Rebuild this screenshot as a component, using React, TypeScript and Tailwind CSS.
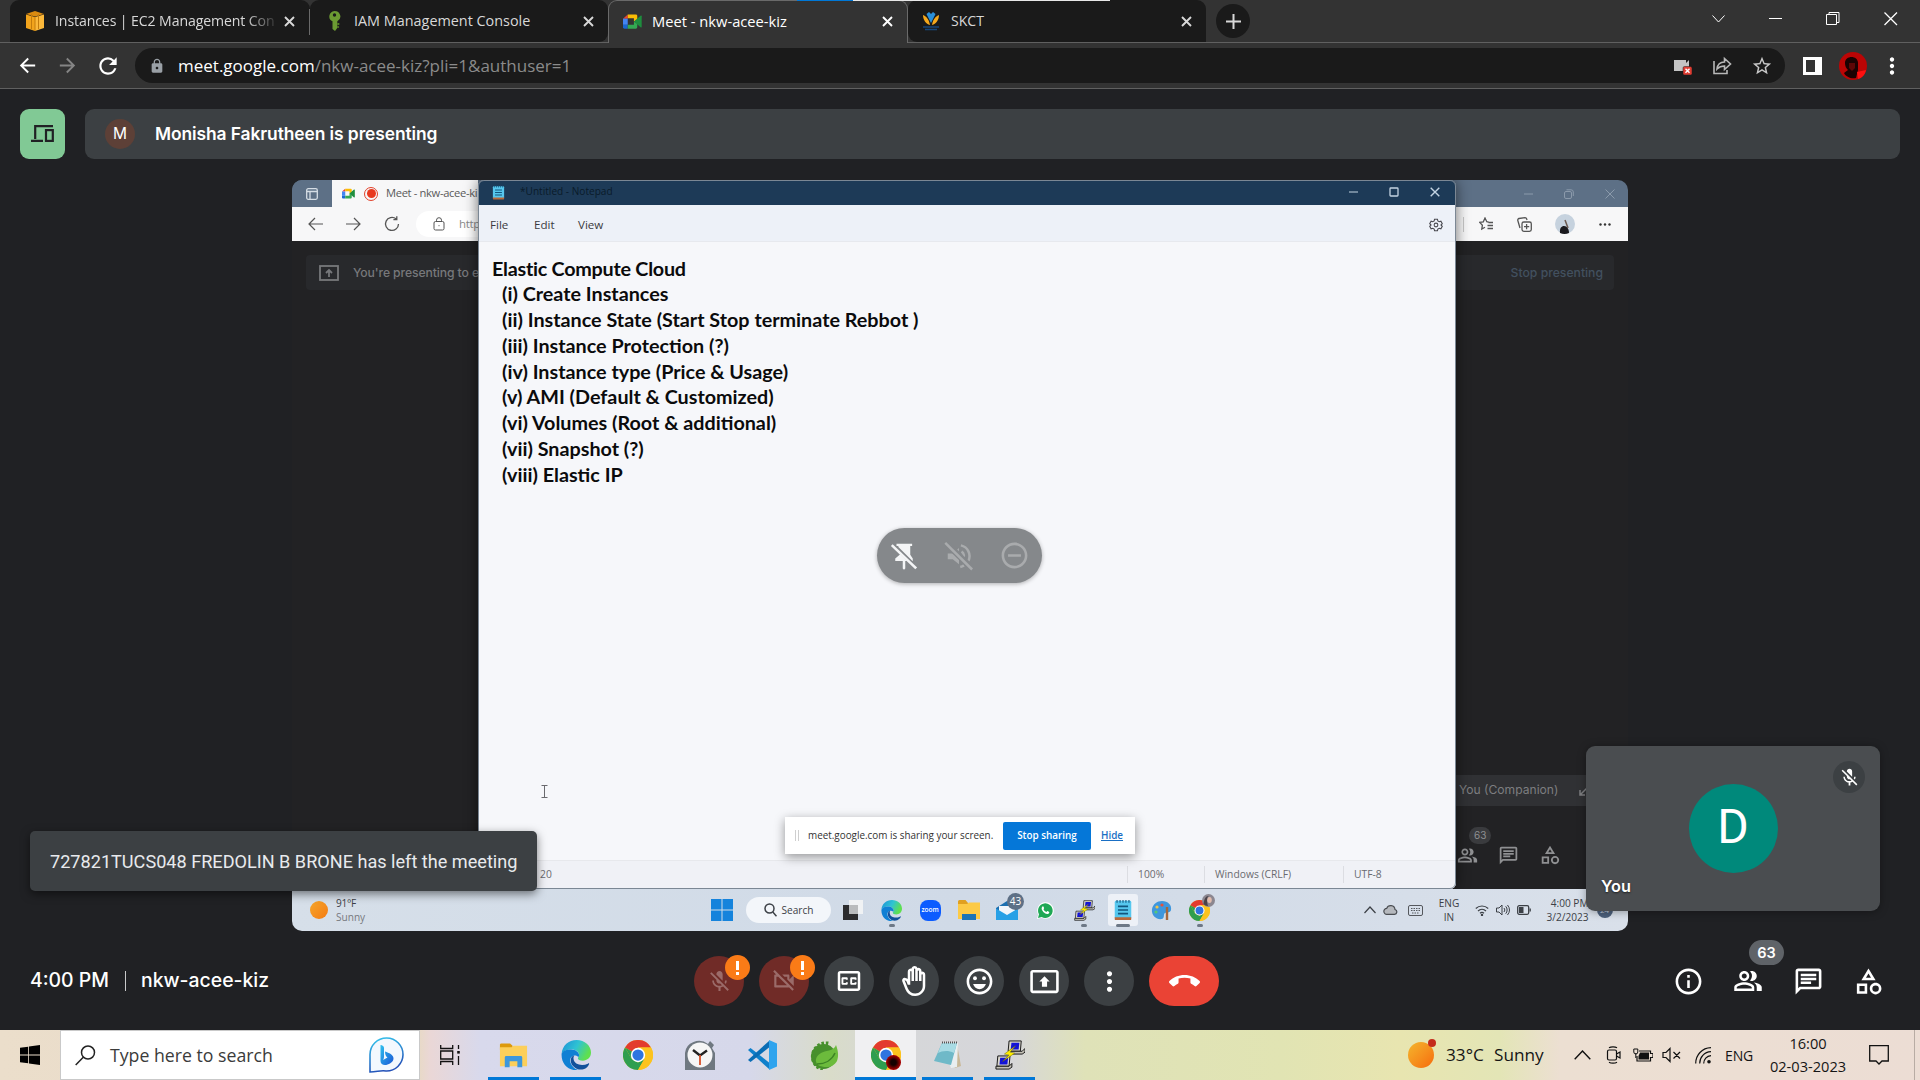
import React from "react";
import type { ReactNode } from "react";
import {
  MdArrowBack,
  MdArrowForward,
  MdCallEnd,
  MdLock,
  MdMicOff,
  MdMoreVert,
  MdOutlineBackHand,
  MdOutlineCategory,
  MdOutlineChat,
  MdOutlineClosedCaption,
  MdOutlineEmojiEmotions,
  MdOutlineInfo,
  MdOutlinePeopleAlt,
  MdOutlinePresentToAll,
  MdOutlineVideocamOff,
  MdRefresh,
  MdRemoveCircleOutline,
  MdStarBorder,
} from "react-icons/md";

const OPEN = "font-['Open_Sans',sans-serif]";
const INTER = "font-['Inter',sans-serif]";

/* ---------- App logos ---------- */

function ChromeLogo({ size }: { size: number }) {
  return (
    <svg width={size} height={size} viewBox="0 0 48 48">
      <circle cx="24" cy="24" r="24" fill="#fcc31e" />
      <path d="M24 24 3.2 12A24 24 0 0 1 44.8 12H24z" fill="#e33b2e" />
      <path d="M3.2 12A24 24 0 0 0 24 48l10.4-18L24 36 13.6 30z" fill="#2f9e4f" />
      <path d="M3.2 12 13.6 30 24 24z" fill="#2f9e4f" />
      <path d="M44.8 12A24 24 0 0 1 24 48l10.4-18A12 12 0 0 0 34.4 18L24 12z" fill="#fcc31e" />
      <circle cx="24" cy="24" r="11.5" fill="#fff" />
      <circle cx="24" cy="24" r="9" fill="#2f74e0" />
    </svg>
  );
}

function EdgeLogo({ size }: { size: number }) {
  return (
    <svg width={size} height={size} viewBox="0 0 48 48">
      <defs>
        <linearGradient id="edgeTop" x1="0" y1="0" x2="1" y2="0.4">
          <stop offset="0" stopColor="#1d8fd8" />
          <stop offset="0.55" stopColor="#2fc3d3" />
          <stop offset="1" stopColor="#5fe04f" />
        </linearGradient>
      </defs>
      <path d="M1 22C2 9 12 0 25 0c13 0 23 9 23 20 0 8-6 13-13 13-5 0-8-2-8-4 0-1 2-2 2-5 0-5-5-9-12-9C9 15 3 18 1 22z" fill="url(#edgeTop)" />
      <path d="M1 22c2-5 8-7 15-7 8 0 13 5 13 9 0 2-1 3-1 3-2-2-5-3-8-2-6 2-7 9-3 15 3 5 8 8 13 8-1 0-4 .5-6 .4C10 48 0 37 1 22z" fill="#1080d4" />
      <path d="M17 27c-3 6-1 13 5 17 6 5 15 4 20-1 2-2 3-4 3-5 0-1-1-1-2 0-9 4-22 2-23-8 0-2 0-3 1-5-2 0-3 1-4 2z" fill="#12509b" />
    </svg>
  );
}

function FolderLogo({ size }: { size: number }) {
  return (
    <svg width={size} height={size} viewBox="0 0 32 32">
      <path d="M2 5a1.500 1.500 0 0 1 1.500-1.500h9L15 6v4H2z" fill="#dd9a0c" />
      <path d="M2 7.500h12l2-1.500h14v21H2z" fill="#fccf5a" />
      <path d="M7 28V18a1.500 1.500 0 0 1 1.500-1.500h15A1.500 1.500 0 0 1 25 18v10h-5v-6h-8v6z" fill="#3d97dc" />
    </svg>
  );
}

function PuttyLogo({ size }: { size: number }) {
  return (
    <svg width={size} height={size} viewBox="0 0 32 32" stroke="#111" strokeWidth="1">
      <path d="M15 1h13l-1 11H14z" fill="#d9d6cc" />
      <path d="M17.500 3h8.500l-.8 7h-8.400z" fill="#1313d8" stroke="none" />
      <path d="M15 12h14l3-3v4l-3 2H15z" fill="#c4c1b6" />
      <path d="M3 17h13l-1 11H2z" fill="#d9d6cc" />
      <path d="M5.500 19H14l-.8 7H4.800z" fill="#1313d8" stroke="none" />
      <path d="M1 28h14l3-3v4l-3 2H1z" fill="#c4c1b6" />
      <path d="m22 6-12 9 5 1-7 7 13-9-5-1z" fill="#ffee00" stroke="#6b6400" strokeWidth=".5" />
    </svg>
  );
}

function MeetLogo({ size }: { size: number }) {
  return (
    <svg width={size} height={size} viewBox="0 0 20 20">
      <path d="M5 2.500V7H0z" fill="#e94235" />
      <path d="M5 2.500h8.500A1.500 1.500 0 0 1 15 4v4l-3.500 2V6.500H5z" fill="#fbbc04" />
      <path d="M0 7h5v6.500H0z" fill="#4285f4" />
      <path d="M0 13.500h5v4H1.500A1.500 1.500 0 0 1 0 16z" fill="#1967d2" />
      <path d="M5 13.500h6.500V10L15 12v4a1.500 1.500 0 0 1-1.500 1.500H5z" fill="#34a853" />
      <path d="m11.500 10 7-6c.6-.5 1.200-.2 1.200.5v11c0 .7-.6 1-1.200.5z" fill="#1e8e3e" />
    </svg>
  );
}

function WindowsNotepad({ size }: { size: number }) {
  return (
    <svg width={size} height={size} viewBox="0 0 24 24">
      <rect x="3" y="2" width="18" height="20" rx="1.500" fill="#56c7ee" />
      <path d="M3 20h18v2a1 1 0 0 1-1 1H4a1 1 0 0 1-1-1z" fill="#b8683a" />
      <path d="M6.500 8h11M6.500 12h11M6.500 16h11" stroke="#12567e" strokeWidth="1.800" />
      <path d="M5.500 1v3M8.800 1v3M12 1v3M15.200 1v3M18.500 1v3" stroke="#155a80" strokeWidth="1.200" />
    </svg>
  );
}

/* ---------- Browser ---------- */

function TabClose({ className }: { className: string }) {
  return (
    <svg className={className} width="11" height="11" viewBox="0 0 11 11" stroke="currentColor" strokeWidth="1.900">
      <path d="m1 1 9 9M10 1l-9 9" />
    </svg>
  );
}

function TabStrip() {
  return (
    <div className={`relative flex h-[42px] bg-[#333333] text-[14.4px] text-[#d8d8d8] ${OPEN}`}>
      <div className="ml-[10px] flex w-[300px] items-center rounded-t-[9px] bg-[#1a1a1a] pl-4">
        <svg width="18" height="20" viewBox="0 0 18 20">
          <path d="M0 3.500 9 6v14l-9-3z" fill="#f2a41c" />
          <path d="M18 3.500 9 6v14l9-3z" fill="#fbb83a" />
          <path d="M0 3 9 0l9 3-9 2.500z" fill="#d98a10" />
          <path d="M5.500 3v15M12.500 3v15M9 6v14" stroke="#c47c0c" strokeWidth="1" />
        </svg>
        <div className="ml-[11px] w-[220px] whitespace-nowrap text-[14.100px] tracking-[-0.100px] [mask-image:linear-gradient(to_right,black_190px,transparent_225px)]">
          Instances | EC2 Management Con
        </div>
        <TabClose className="ml-[9px]" />
      </div>
      <div className="flex w-[298px] items-center rounded-t-[9px] rounded-br-[9px] bg-[#1a1a1a] pl-[18px]">
        <svg width="13" height="20" viewBox="0 0 13 20">
          <path d="M6.500 0a6 5.500 0 0 1 2.800 10.300V17L7 20l-2.500-2v-7.700A6 5.500 0 0 1 6.500 0z" fill="#6b9a32" />
          <circle cx="6.500" cy="4" r="1.700" fill="#1a1a1a" />
          <path d="M9.300 12h2v2h-2zM9.300 15h1.500v2H9.300z" fill="#557f24" />
        </svg>
        <div className="ml-[13px] w-[229px] whitespace-nowrap">IAM Management Console</div>
        <TabClose className="" />
      </div>
      <div className="z-10 flex h-[43px] w-[300px] items-center rounded-t-[9px] border border-b-0 border-[#6a6a6a] bg-[#333333] pb-px pl-[14px] text-white">
        <MeetLogo size={19} />
        <div className="ml-[10px] w-[230px] whitespace-nowrap text-[14.700px]">Meet - nkw-acee-kiz</div>
        <TabClose className="" />
      </div>
      <div className="flex w-[298px] items-center rounded-t-[9px] rounded-bl-[9px] bg-[#1a1a1a] pl-[14px]">
        <svg width="18" height="20" viewBox="0 0 18 20">
          <path d="M9 12 4.500 3 7 1l2 2 2-2 2.500 2z" fill="#2a8fd8" />
          <path d="M1 4c3 1 6 4 7 10-4-1-7-5-7-10zM17 4c-3 1-6 4-7 10 4-1 7-5 7-10z" fill="#f5a81c" />
          <path d="M1 16h16M3 18.500h12" stroke="#17477c" strokeWidth="1.600" />
        </svg>
        <div className="ml-[11px] w-[226px] text-[14.100px]">SKCT</div>
        <TabClose className="ml-1" />
      </div>
      <div className="ml-[10px] mt-1 flex size-[34px] items-center justify-center rounded-full bg-[#1a1a1a]">
        <svg width="15" height="15" viewBox="0 0 15 15" stroke="#d8d8d8" strokeWidth="2">
          <path d="M7.500 0v15M0 7.500h15" />
        </svg>
      </div>
      <div className="ml-auto flex items-start gap-[44px] pr-[22px] pt-3 text-white">
        <svg width="13" height="14" viewBox="0 0 13 14" fill="none" stroke="currentColor">
          <path d="m.5 3.500 6 6.500 6-6.500" />
        </svg>
        <svg width="13" height="14" viewBox="0 0 13 14" fill="none" stroke="currentColor">
          <path d="M0 6.500h13" />
        </svg>
        <svg width="14" height="14" viewBox="0 0 14 14" fill="none" stroke="currentColor">
          <path d="M.5 2.500h10v10H.5zM3 2.500v-2h10v10h-2.500" />
        </svg>
        <svg width="14" height="14" viewBox="0 0 14 14" fill="none" stroke="currentColor" strokeWidth="1.300">
          <path d="m.5.5 12.500 12.500M13 .5.5 13" />
        </svg>
      </div>
      <div className="absolute left-[309px] top-[9px] h-[26px] w-px bg-[#6a6a6a]" />
      <div className="absolute left-[797px] top-0 z-20 h-px w-[56px] bg-[#0078d7]" />
      <div className="absolute left-[853px] top-0 z-20 h-px w-[257px] bg-[#e8e8e8]" />
    </div>
  );
}

function Toolbar() {
  return (
    <div className={`flex h-[47px] items-center border-y border-[#606060] bg-[#333333] ${OPEN}`}>
      <MdArrowBack className="ml-4 text-white" size={23} />
      <MdArrowForward className="ml-[17px] text-[#858585]" size={23} />
      <MdRefresh className="ml-4 text-white" size={26} />
      <div className="ml-[14px] flex h-[35px] w-[1650px] items-center rounded-full bg-[#1a1a1a] pl-[14px] pr-[12px]">
        <MdLock className="text-[#9aa0a6]" size={16} />
        <div className="ml-[13px] whitespace-nowrap text-[17px] text-[#8b8b8b]">
          <span className="text-white">meet.google.com</span>/nkw-acee-kiz?pli=1&amp;authuser=1
        </div>
        <svg className="ml-auto" width="19" height="18" viewBox="0 0 19 18">
          <path d="M1 3h12v3l3-3v11H1z" fill="#c4c4c4" />
          <rect x="10" y="9.500" width="9" height="8.500" rx="1.500" fill="#e03c32" stroke="#1a1a1a" strokeWidth=".5" />
          <path d="m12.500 11.700 4 4m0-4-4 4" stroke="#fff" strokeWidth="1.400" />
        </svg>
        <svg className="ml-5" width="20" height="19" viewBox="0 0 20 19" fill="none" stroke="#b8b8b8" strokeWidth="1.600">
          <path d="M2 5v12.500h13V14" />
          <path d="M5 13c.5-4.500 3.500-7 7.500-7V2.500L18.500 8l-6 5.500V10C9 10 7 11 5 13z" />
        </svg>
        <MdStarBorder className="ml-[19px] text-[#c8c8c8]" size={22} />
      </div>
      <div className="ml-[18px] flex h-[18px] w-[19px] bg-white p-[3px]">
        <div className="w-[9px] bg-[#333333]" />
      </div>
      <svg className="ml-[17px]" width="28" height="28" viewBox="0 0 28 28">
        <circle cx="14" cy="14" r="14" fill="#bb0505" />
        <path d="M6 11c0-8 13-8 13 0v7l-2 8c-5 1-10-1-12-5l4-3c-2-2-3-4-3-7z" fill="#1c0202" />
        <path d="M10 11h6v5l-3 3-3-3z" fill="#5e0606" />
        <path d="m18 20 9-2c-1 5-4 8-8 9z" fill="#ff1010" />
      </svg>
      <MdMoreVert className="ml-3 text-white" size={26} />
    </div>
  );
}

/* ---------- Screen being presented ---------- */

function EdgeWindow() {
  return (
    <div className="absolute inset-0 flex flex-col">
      <div className="flex h-[27px] bg-[#5d7086]">
        <div className="flex w-10 items-center justify-center rounded-br-[4px] bg-[#5d7086]">
          <svg width="12" height="12" viewBox="0 0 12 12" fill="none" stroke="#d5dde5" strokeWidth="1.300">
            <rect x=".7" y=".7" width="10.600" height="10.600" rx="1.500" />
            <path d="M.7 3.500h10.600M4 3.500v8" />
          </svg>
        </div>
        <div className="flex w-[146px] items-center bg-[#f7f7f8] pl-[10px]">
          <MeetLogo size={13} />
          <span className="ml-[9px] flex size-[14px] items-center justify-center rounded-full border border-[#e0402a]">
            <span className="size-[9px] rounded-full bg-[#e8391f]" />
          </span>
          <span className={`ml-2 whitespace-nowrap text-[11.200px] tracking-[-0.350px] text-[#5a5a5a] ${OPEN}`}>Meet - nkw-acee-ki</span>
        </div>
        <div className="ml-auto flex items-center gap-[31px] pr-[13px] text-[#8b9aab]">
          <svg width="9" height="10" viewBox="0 0 9 10" fill="none" stroke="currentColor">
            <path d="M0 5h9" />
          </svg>
          <svg width="10" height="10" viewBox="0 0 10 10" fill="none" stroke="currentColor">
            <rect x=".5" y="2.500" width="7" height="7" rx="1.500" />
            <path d="M2.500.8H7A2.300 2.300 0 0 1 9.300 3v4" />
          </svg>
          <svg width="10" height="10" viewBox="0 0 10 10" fill="none" stroke="currentColor">
            <path d="m.5.5 9 9M9.500.5l-9 9" />
          </svg>
        </div>
      </div>
      <div className="flex h-[34px] items-center bg-[#f7f7f8] text-[#555]">
        <svg className="ml-4" width="15" height="14" viewBox="0 0 15 14" fill="none" stroke="currentColor" strokeWidth="1.200">
          <path d="M15 7H1M7 1 1 7l6 6" />
        </svg>
        <svg className="ml-[23px]" width="15" height="14" viewBox="0 0 15 14" fill="none" stroke="currentColor" strokeWidth="1.200">
          <path d="M0 7h14M8 1l6 6-6 6" />
        </svg>
        <svg className="ml-[23px]" width="16" height="16" viewBox="0 0 16 16" fill="none" stroke="currentColor" strokeWidth="1.300">
          <path d="M14.500 8A6.500 6.500 0 1 1 12 2.800M12.800.3v3.400H9.400" />
        </svg>
        <div className="ml-4 flex h-[26px] w-[300px] items-center rounded-full bg-white pl-[17px]">
          <svg width="12" height="14" viewBox="0 0 12 14" fill="none" stroke="currentColor">
            <rect x="1" y="4.500" width="10" height="8.500" rx="1.500" />
            <path d="M3.500 4.500V3.200a2.500 2.500 0 0 1 5 0v1.300M6 8.200v1" />
          </svg>
          <span className={`ml-[14px] text-[11.500px] tracking-[-0.300px] text-[#8a8a8a] ${OPEN}`}>http</span>
        </div>
        <div className="ml-auto flex items-center pr-[17px]">
          <span className="h-[15px] w-px bg-[#c8c8c8]" />
          <svg className="ml-[15px]" width="14" height="15" viewBox="0 0 14 15" fill="none" stroke="currentColor" strokeWidth="1.300">
            <path d="M9.500 5 7.800 4.700 6 1 4.300 4.800.7 5.400l2.700 2.800L2.800 12 6 10.300M9.500 5.500h4.500M8.500 8.500H14M8.500 11.500H14" />
          </svg>
          <svg className="ml-6" width="15" height="15" viewBox="0 0 15 15" fill="none" stroke="currentColor" strokeWidth="1.300">
            <rect x="5" y="5" width="9.300" height="9.300" rx="1.800" />
            <path d="M9.600 7v5.200M7 9.600h5.200M3 11 .8 3.500a1.600 1.600 0 0 1 1.200-2L8 .7c1 0 1.500.5 1.800 1.500l.2.800" />
          </svg>
          <svg className="ml-[23px]" width="20" height="20" viewBox="0 0 20 20">
            <circle cx="10" cy="10" r="10" fill="#c6d2de" />
            <path d="M5 19c-.5-4 1-7 4-7s5 3 5 7c-3 1.300-6 1.300-9 0z" fill="#1a1a1e" />
            <path d="m10 6 3 8" stroke="#6b5a50" strokeWidth="1.500" />
          </svg>
          <svg className="ml-[24px]" width="12" height="3" viewBox="0 0 12 3" fill="#333">
            <circle cx="1.500" cy="1.500" r="1.200" />
            <circle cx="6" cy="1.500" r="1.200" />
            <circle cx="10.500" cy="1.500" r="1.200" />
          </svg>
        </div>
      </div>
      <div className="flex flex-1 flex-col bg-[#222224] pl-[14px] pr-[14px] pt-[14px]">
        <div className={`flex h-[35px] items-center justify-between rounded-[4px] bg-[#28292c] pl-[13px] pr-[11px] pt-px text-[12.200px] font-medium ${INTER}`}>
          <div className="flex items-center gap-[14px] text-[#77787b]">
            <svg width="20" height="16" viewBox="0 0 20 16" fill="none" stroke="currentColor" strokeWidth="1.800">
              <rect x="1" y="1" width="18" height="14" />
              <path d="M10 12V5M7 8l3-3 3 3" />
            </svg>
            <span className="whitespace-nowrap tracking-[-0.100px]">You're presenting to e</span>
          </div>
          <span className="text-[#42505f]">Stop presenting</span>
        </div>
      </div>
      <div className="absolute left-[1164px] top-[595px] flex h-[31px] w-[172px] items-center bg-[#303134] pl-[3px]">
        <span className={`whitespace-nowrap text-[12.100px] text-[#7d7e80] ${INTER}`}>You (Companion)</span>
        <svg className="ml-[21px]" width="10" height="10" viewBox="0 0 10 10" fill="none" stroke="#7d7e80" strokeWidth="1.500">
          <path d="m9 1-8 8M1 4v5h5" />
        </svg>
      </div>
      <div className="absolute left-[1165px] top-[664px] flex items-center gap-[20px] text-[#8f9092]">
        <MdOutlinePeopleAlt size={21} />
        <MdOutlineChat size={21} />
        <MdOutlineCategory size={22} />
      </div>
      <div className={`absolute left-[1177px] top-[647px] rounded-full bg-[#3a3b3e] px-[5px] py-px text-[10px] text-[#8f9092] ${INTER}`}>63</div>
    </div>
  );
}

const notes = [
  "(i) Create Instances",
  "(ii) Instance State (Start Stop terminate Rebbot )",
  "(iii) Instance Protection (?)",
  "(iv) Instance type (Price & Usage)",
  "(v) AMI (Default & Customized)",
  "(vi) Volumes (Root & additional)",
  "(vii) Snapshot (?)",
  "(viii) Elastic IP",
];

function NotepadWindow() {
  return (
    <div className={`absolute left-[186px] top-0 flex h-[709px] w-[978px] flex-col overflow-hidden rounded-[6px] bg-[#f6f7fa] shadow-[0_0_14px_rgba(0,0,0,0.55)] outline-1 -outline-offset-1 outline-[#7b8794] ${OPEN}`}>
      <div className="flex h-[25px] shrink-0 items-center bg-[#1d3a57] pb-px pl-[13px] pr-4">
        <WindowsNotepad size={15} />
        <span className="ml-[14px] text-[10.100px] text-[#0a1a2a]">*Untitled - Notepad</span>
        <div className="ml-auto flex items-center gap-[31px] text-[#c3d3e2]">
          <svg width="9" height="10" viewBox="0 0 9 10" fill="none" stroke="currentColor" strokeWidth="1.200">
            <path d="M0 5h9" />
          </svg>
          <svg width="10" height="10" viewBox="0 0 10 10" fill="none" stroke="currentColor" strokeWidth="1.300">
            <rect x="1" y="1" width="8" height="8" rx=".8" />
          </svg>
          <svg width="10" height="10" viewBox="0 0 10 10" fill="none" stroke="currentColor" strokeWidth="1.400">
            <path d="m.7.700 8.600 8.600M9.300.7.700 9.300" />
          </svg>
        </div>
      </div>
      <div className="flex h-[37px] shrink-0 items-center border-b border-[#e7e9ee] bg-[#edf1f8] pl-3 pr-[13px] pt-[3px] text-[11.600px] text-[#3b3b40]">
        <span className="w-[44px]">File</span>
        <span className="w-[44px]">Edit</span>
        <span>View</span>
        <svg className="ml-auto" width="14" height="14" viewBox="0 0 24 24" fill="none" stroke="#4a4a50" strokeWidth="1.800">
          <path d="m9.500 2-.6 3-2.400 1.400L3.600 5.400 1.200 9.800l2.300 2.200-2.300 2.200 2.400 4.400 2.900-1 2.400 1.400.6 3h5l.6-3 2.400-1.400 2.900 1 2.400-4.400-2.300-2.200 2.300-2.200-2.400-4.400-2.900 1L15.100 5l-.6-3z" />
          <circle cx="12" cy="12" r="3.200" />
        </svg>
      </div>
      <div className="flex-1 pl-[14px] pt-[13.500px] font-['Lato',sans-serif] text-[19.750px] font-bold leading-[25.800px] text-[#0b0b0c]">
        <div className="tracking-[-0.250px]">Elastic Compute Cloud</div>
        {notes.map((line) => (
          <div key={line} className="whitespace-pre pl-[10px]">
            {line}
          </div>
        ))}
        <svg className="absolute left-[63px] top-[605px]" width="7" height="13" viewBox="0 0 7 13" fill="none" stroke="#6a6a6e">
          <path d="M.5.5h6M3.500.5v12M.5 12.500h6" />
        </svg>
      </div>
      <div className="flex h-[29px] shrink-0 items-center border-t border-[#e7e8ec] bg-[#f0f1f6] pb-px text-[10.300px] text-[#6a6b70]">
        <span className="ml-[62px] w-[587px]">20</span>
        <span className="flex h-[17px] w-[77px] items-center border-l border-[#dcdde2] pl-[10px]">100%</span>
        <span className="flex h-[17px] w-[139px] items-center whitespace-nowrap border-l border-[#dcdde2] pl-[10px]">Windows (CRLF)</span>
        <span className="flex h-[17px] items-center border-l border-[#dcdde2] pl-[10px]">UTF-8</span>
      </div>
    </div>
  );
}

function SharingBar() {
  return (
    <div className={`absolute left-[493px] top-[637px] flex h-[37px] w-[350px] items-center bg-white pl-[10px] text-[9.900px] text-[#333] shadow-[0_3px_10px_rgba(0,0,0,0.4)] ${OPEN}`}>
      <span className="h-[11px] w-[4px] border-x border-[#cfcfcf]" />
      <span className="ml-[9px] w-[195px] whitespace-nowrap">meet.google.com is sharing your screen.</span>
      <span className="flex h-[28px] w-[88px] items-center justify-center rounded-[2px] bg-[#0577d8] font-semibold text-white">Stop sharing</span>
      <span className="ml-[10px] font-semibold text-[#1a6fc4] underline">Hide</span>
    </div>
  );
}

function SharedApp({ children, active, mark }: { children: ReactNode; active?: boolean; mark?: boolean }) {
  return (
    <div className={`relative flex h-[32px] w-[30px] items-center justify-center rounded-[3px] ${active ? "bg-[#edf1f7]" : ""}`}>
      {children}
      {mark && <span className={`absolute -bottom-px h-[3px] rounded-full bg-[#6d7886] ${active ? "w-[14px]" : "w-[6px]"}`} />}
    </div>
  );
}

function SharedTaskbar() {
  return (
    <div className={`absolute inset-x-0 bottom-0 flex h-[42px] items-center bg-gradient-to-r from-[#d6dfe9] via-[#d0dae7] to-[#d9e0ea] text-[10.100px] text-[#3c4046] ${OPEN}`}>
      <div className="ml-[18px] flex w-[397px] items-center gap-2">
        <span className="size-[18px] rounded-full bg-gradient-to-br from-[#f5a62a] to-[#f47a10]" />
        <div className="leading-[14px]">
          <div className="tracking-[-0.300px]">91°F</div>
          <div className="text-[#77797e]">Sunny</div>
        </div>
      </div>
      <div className="flex items-center">
        <SharedApp>
          <svg width="22" height="22" viewBox="0 0 22 22" fill="#1583dc">
            <path d="M0 0h10.500v10.500H0zM11.500 0H22v10.500H11.500zM0 11.500h10.500V22H0zM11.500 11.500H22V22H11.500z" />
          </svg>
        </SharedApp>
        <div className="ml-[9px] flex h-[26px] w-[85px] items-center justify-center gap-[5px] rounded-full bg-[#f3f6fa]">
          <svg width="13" height="14" viewBox="0 0 13 14" fill="none" stroke="#3c4046" strokeWidth="1.500">
            <circle cx="5.500" cy="5.500" r="4.500" />
            <path d="m8.800 9 3.700 4.200" />
          </svg>
          <span className="pt-px">Search</span>
        </div>
      </div>
      <div className="ml-[7px] flex items-center gap-[8.500px]">
        <SharedApp>
          <svg width="20" height="20" viewBox="0 0 20 20">
            <rect x="6" y="0" width="14" height="14" fill="#f0f2f4" />
            <rect x="0" y="5" width="15" height="15" fill="#2c2c2e" />
            <rect x="6" y="5" width="9" height="9" fill="#b9bbbd" />
          </svg>
        </SharedApp>
        <SharedApp mark><EdgeLogo size={21} /></SharedApp>
        <SharedApp>
          <span className="flex size-[21px] items-center justify-center rounded-[8px] bg-[#0b5cff] text-[6.500px] font-semibold text-white">zoom</span>
        </SharedApp>
        <SharedApp>
          <svg width="22" height="20" viewBox="0 0 22 20">
            <path d="M0 1.500A1.500 1.500 0 0 1 1.500 0h6L10 3v5H0z" fill="#e0a020" />
            <path d="M0 4h9l2-1.500h11V19H0z" fill="#fcca46" />
            <path d="M4 14h14v6H4z" fill="#1a74b8" />
          </svg>
        </SharedApp>
        <SharedApp>
          <svg width="22" height="20" viewBox="0 0 22 20">
            <path d="m0 8 11-7 11 7v12H0z" fill="#1c6fb0" />
            <path d="M3 6h16v10H3z" fill="#f1f5fa" />
            <path d="M0 8.500 11 15l11-6.500V20H0z" fill="#27a0e6" />
          </svg>
          <span className="absolute left-[15px] top-[-1px] flex size-[17px] items-center justify-center rounded-full bg-[#5d7086] text-[10px] text-white">43</span>
        </SharedApp>
        <SharedApp>
          <svg width="17" height="17" viewBox="0 0 17 17">
            <path d="m0 17 1.200-4.500A8.300 8.300 0 1 1 4.500 15.800z" fill="#fff" />
            <path d="m1 16 1-3.700A7.300 7.300 0 1 1 4.700 15z" fill="#1fa855" />
            <path d="M5.500 4.500c1-.6 1.300.8 1.600 1.700l-.6 1c.6 1.300 1.700 2.200 2.900 2.700l.9-1c1 .4 2.300 1 2 1.600-.5 1.600-2.300 1.900-4 1.100A8 8 0 0 1 5 8c-.6-1.300-.4-2.700.5-3.500z" fill="#fff" />
          </svg>
        </SharedApp>
        <SharedApp mark><PuttyLogo size={21} /></SharedApp>
        <SharedApp active mark><WindowsNotepad size={22} /></SharedApp>
        <SharedApp>
          <svg width="21" height="21" viewBox="0 0 21 21">
            <path d="M11 1c6 0 10 4 9 9-.7 3-4 2-6 3s0 5-3 6C6 20 0 16 1 9 2 4 6 1 11 1z" fill="#3f97dd" />
            <circle cx="6" cy="7" r="1.600" fill="#f5c542" />
            <circle cx="11" cy="5" r="1.600" fill="#e5533c" />
            <circle cx="5" cy="12" r="1.600" fill="#55c878" />
            <path d="M16 7v13" stroke="#a5673c" strokeWidth="2.400" />
          </svg>
        </SharedApp>
        <SharedApp mark>
          <ChromeLogo size={21} />
          <svg className="absolute right-0 top-0" width="13" height="13" viewBox="0 0 13 13">
            <circle cx="6.500" cy="6.500" r="6.500" fill="#8b8790" />
            <ellipse cx="7.500" cy="6" rx="2.300" ry="3" fill="#e0bcae" />
            <path d="M1.500 10C2 5 4 1.500 7 2c-3 2-2 6-1 10-2 0-3.500-.8-4.500-2z" fill="#4b4348" />
          </svg>
        </SharedApp>
      </div>
      <svg className="ml-[149px]" width="12" height="8" viewBox="0 0 12 8" fill="none" stroke="#3c4046" strokeWidth="1.200">
        <path d="m.5 7 5.500-6 5.500 6" />
      </svg>
      <svg className="ml-[7px]" width="15" height="10" viewBox="0 0 15 10" fill="#b5b8bd" stroke="#4a4d52" strokeWidth="1.200">
        <path d="M4 9.400a3 3 0 0 1-.3-6A4.300 4.300 0 0 1 12 4.500a2.500 2.500 0 0 1-.5 4.900z" />
      </svg>
      <svg className="ml-[10px]" width="15" height="11" viewBox="0 0 15 11" fill="none" stroke="#55585d">
        <rect x=".5" y=".5" width="14" height="10" rx="1.500" />
        <path d="M3 3.500h9M3 5.500h9M4 8h7" strokeDasharray="1.500 1" />
      </svg>
      <div className="ml-[14px] w-[25px] text-center leading-[14px]">
        ENG
        <br />
        IN
      </div>
      <svg className="ml-[13px]" width="14" height="12" viewBox="0 0 14 12" fill="none" stroke="#3c4046" strokeWidth="1.200">
        <path d="M.8 4.500a9 9 0 0 1 12.400 0M3 7a6 6 0 0 1 8 0M5 9.200a3 3 0 0 1 4 0" />
        <circle cx="7" cy="11" r=".6" />
      </svg>
      <svg className="ml-[7px]" width="14" height="12" viewBox="0 0 14 12" fill="none" stroke="#3c4046">
        <path d="M.5 4H3l3-3v10L3 8H.5zM8 4a3 3 0 0 1 0 4M9.700 2.300a5.500 5.500 0 0 1 0 7.400M11.500 1a8 8 0 0 1 0 10" />
      </svg>
      <svg className="ml-[7px]" width="14" height="10" viewBox="0 0 14 10" fill="none" stroke="#3c4046" strokeWidth="1.300">
        <rect x=".7" y=".7" width="11" height="8.600" rx="1.500" />
        <path d="M13.200 3.500v3" />
        <path d="M2 2h4.500v6H2z" fill="#3c4046" stroke="none" />
      </svg>
      <div className="ml-[14px] w-[44px] whitespace-nowrap text-right leading-[14px]">
        4:00 PM
        <br />
        3/2/2023
      </div>
      <span className="ml-[8px] flex size-[16px] items-center justify-center rounded-full bg-[#4c607c] text-[8px] text-[#c6d0dc]">24</span>
    </div>
  );
}

function VideoControls() {
  return (
    <div className="absolute left-[585px] top-[348px] flex h-[55px] w-[165px] items-center justify-center gap-[25px] rounded-full bg-[#85888b] shadow-[0_1px_4px_rgba(0,0,0,0.3)]">
      <svg width="30" height="30" viewBox="0 0 24 24" fill="#f4f5f6">
        <path d="M17 4v7l2 3v2h-.2L7.500 4.700V4H6V2.200h12.500V4zM9 10.500 5 14v2h6v6l1 1 1-1v-6h1.500z" />
        <path d="m1.500 4 1.400-1.400L22.500 21.200 21 22.600z" />
      </svg>
      <svg width="30" height="30" viewBox="0 0 24 24" fill="none" stroke="#a9abad" strokeWidth="2">
        <path d="M3 10h4l5-4.500v13L7 14.500H3z" fill="#a9abad" stroke="none" />
        <path d="M14 8.500a4 4 0 0 1 1 6M13.500 3.500a8.800 8.800 0 0 1 6 12.500M13 20.800a9 9 0 0 0 3-1.300" />
        <path d="M1 1 23 22.500" stroke="#85888b" strokeWidth="5" />
        <path d="M1 1.500 22.500 22.800" />
      </svg>
      <MdRemoveCircleOutline className="text-[#a9abad]" size={31} />
    </div>
  );
}

/* ---------- Meet ---------- */

function SelfView() {
  return (
    <div className={`absolute left-[1586px] top-[657px] h-[165px] w-[294px] rounded-[9px] bg-[#4a4d50] shadow-[0_1px_8px_rgba(0,0,0,0.35)] ${INTER}`}>
      <div className="flex h-full items-center justify-center">
        <div className="flex size-[89px] items-center justify-center rounded-full bg-[#00897b] pb-[3px] font-['Roboto',sans-serif] text-[48px] text-white">D</div>
      </div>
      <div className="absolute right-[15px] top-[15px] flex size-8 items-center justify-center rounded-full bg-[#3c4043]">
        <MdMicOff className="text-white" size={21} />
      </div>
      <div className="absolute bottom-[13px] left-[15px] text-[16.300px] font-semibold text-white [text-shadow:0_1px_2px_rgba(0,0,0,0.6)]">You</div>
    </div>
  );
}

function RoundButton({ children, off }: { children: ReactNode; off?: boolean }) {
  return (
    <div className={`relative flex size-[50px] items-center justify-center rounded-full ${off ? "bg-[#702b27] text-[#9b6b69]" : "bg-[#3c4043] text-white"}`}>
      {children}
      {off && (
        <span className="absolute -top-px left-[31px] flex size-[25px] items-center justify-center rounded-full bg-[#fa7b17]">
          <svg width="3" height="14" viewBox="0 0 3 14" fill="#fff">
            <path d="M0 0h3v9H0zM0 11h3v3H0z" />
          </svg>
        </span>
      )}
    </div>
  );
}

function CallBar() {
  return (
    <div className={`relative mt-auto flex h-[98px] items-center text-[19.400px] font-medium text-white ${INTER}`}>
      <div className="ml-[30px] flex w-[664px] items-center">
        <span className="w-[95px] whitespace-nowrap">4:00 PM</span>
        <span className="h-5 w-px bg-[#c8c9ca]" />
        <span className="ml-[15px]">nkw-acee-kiz</span>
      </div>
      <div className="flex items-center gap-[15px]">
        <RoundButton off><MdMicOff size={25} /></RoundButton>
        <RoundButton off><MdOutlineVideocamOff size={26} /></RoundButton>
        <RoundButton><MdOutlineClosedCaption size={30} /></RoundButton>
        <RoundButton><MdOutlineBackHand size={30} /></RoundButton>
        <RoundButton><MdOutlineEmojiEmotions size={31} /></RoundButton>
        <RoundButton><MdOutlinePresentToAll size={31} /></RoundButton>
        <RoundButton><MdMoreVert size={31} /></RoundButton>
        <div className="flex h-[50px] w-[70px] items-center justify-center rounded-full bg-[#ea4335]">
          <MdCallEnd size={31} />
        </div>
      </div>
      <div className="ml-auto flex items-center gap-[30px] pr-[37px]">
        <MdOutlineInfo size={31} className="-mx-[0.500px]" />
        <div className="relative">
          <MdOutlinePeopleAlt size={30} />
          <span className="absolute -top-[26px] left-[16px] flex h-[25px] w-[35px] items-center justify-center rounded-full bg-[#5f6368] text-[14.500px] font-semibold">63</span>
        </div>
        <MdOutlineChat size={31} className="-mx-[0.500px]" />
        <MdOutlineCategory size={31} className="-mx-[0.500px]" />
      </div>
    </div>
  );
}

function MeetPage() {
  return (
    <main className="relative flex flex-1 flex-col bg-[#202124]">
      <div className="flex items-center gap-5 px-5 pt-5">
        <div className="flex h-[50px] w-[45px] items-center justify-center rounded-[9px] bg-[#81c995] text-[#202124]">
          <svg width="23" height="18" viewBox="0 0 23 18" fill="none" stroke="currentColor" strokeWidth="2.200">
            <path d="M22 1.100H4.200v13M0 15.900h12" />
            <rect x="15" y="5.100" width="6.800" height="10.800" />
          </svg>
        </div>
        <div className={`flex h-[50px] flex-1 items-center rounded-[9px] bg-[#3c4043] pl-5 text-white ${INTER}`}>
          <span className="flex size-[30px] items-center justify-center rounded-full bg-[#5d4037] text-[15.500px]">M</span>
          <span className="ml-5 text-[17.400px] font-semibold tracking-[-0.080px]">Monisha Fakrutheen is presenting</span>
        </div>
      </div>
      <div className="relative mx-auto mt-[21px] h-[751px] w-[1336px] overflow-hidden rounded-[10px] bg-[#222224]">
        <EdgeWindow />
        <NotepadWindow />
        <SharingBar />
        <SharedTaskbar />
        <VideoControls />
      </div>
      <div className="absolute left-[30px] top-[742px] flex h-[60px] w-[507px] items-center whitespace-nowrap rounded-[5px] bg-[#3c4043] pl-5 pt-px font-['Roboto',sans-serif] text-[18.120px] text-[#e8eaed] shadow-[0_3px_10px_rgba(0,0,0,0.5)]">
        727821TUCS048 FREDOLIN B BRONE has left the meeting
      </div>
      <SelfView />
      <CallBar />
    </main>
  );
}

/* ---------- Windows taskbar ---------- */

function TaskApp({ children, line }: { children: ReactNode; line?: boolean }) {
  return (
    <div className="relative flex h-full w-[51px] items-center justify-center">
      {children}
      {line && <span className="absolute bottom-0 h-[3px] w-full bg-[#0078d7]" />}
    </div>
  );
}

function Taskbar() {
  return (
    <div className={`flex h-[50px] items-center bg-[linear-gradient(to_right,#ebdecb_0px,#e8d9c8_420px,#ead7d6_430px,#d8d9ec_480px,#d6d8ea_750px,#d9dcc9_830px,#d6d7d9_900px,#d6d6da_1010px,#dfe2b8_1085px,#e1e4b3_1280px,#e8e5b0_1400px,#e3e5b6_1500px,#ecdfd2_1560px,#ecddd4_1920px)] text-[#151515] ${OPEN}`}>
      <svg className="ml-5" width="20" height="20" viewBox="0 0 20 20" fill="#000">
        <path d="M0 2.800 8.200 1.700v7.900H0zM9 1.600 20 0v9.600H9zM0 10.400h8.200v7.900L0 17.200zM9 10.400h11V20L9 18.400z" />
      </svg>
      <div className="ml-5 flex h-[50px] w-[360px] items-center border border-[#c9c9c9] bg-white">
        <svg className="ml-[14px]" width="21" height="21" viewBox="0 0 21 21" fill="none" stroke="#222" strokeWidth="1.500">
          <circle cx="13" cy="7.500" r="6.500" />
          <path d="M8.500 12 .7 20" />
        </svg>
        <span className="ml-[14px] w-[180px] whitespace-nowrap text-[17.700px] text-[#3b3b3b]">Type here to search</span>
        <svg className="ml-[78px]" width="36" height="36" viewBox="0 0 36 36" fill="none">
          <defs>
            <linearGradient id="bingRing" x1="0" y1="0" x2="0.300" y2="1">
              <stop offset="0" stopColor="#35c8ee" />
              <stop offset="1" stopColor="#2451b8" />
            </linearGradient>
            <linearGradient id="bingMark" x1="0" y1="0" x2="1" y2="1">
              <stop offset="0" stopColor="#2fc0ee" />
              <stop offset="1" stopColor="#1b58d6" />
            </linearGradient>
          </defs>
          <path d="M2 35V17.500A16.500 16.500 0 1 1 18 34c-4-1-8 .5-16 1z" stroke="url(#bingRing)" strokeWidth="1.600" fill="#f3f8fe" />
          <path d="M12.500 8c2 .3 3.500 1.200 3.500 3v8.500c0 2-.5 3-1 3.500l4.500-2.500c-1.800-1-2.500-4-2.500-6 4 1.500 8.500 3 8.500 7 0 4-5.500 6.500-8.500 6.500-2.500 0-4.500-1.500-4.500-4z" fill="url(#bingMark)" />
        </svg>
      </div>
      <svg className="ml-5" width="20" height="20" viewBox="0 0 20 20" fill="none" stroke="#111" strokeWidth="1.300">
        <path d="M.7 0v3.500h12V0M.7 20v-3.500h12V20M.7 6h12v8H.7zM18.500 0v4M18.500 11v9" />
        <path d="M17.200 6h2.600v2.600h-2.600z" fill="#111" stroke="none" />
      </svg>
      <div className="ml-[28px] flex h-full gap-[11px]">
        <TaskApp line><FolderLogo size={31} /></TaskApp>
        <TaskApp line><EdgeLogo size={30} /></TaskApp>
        <TaskApp><ChromeLogo size={30} /></TaskApp>
        <TaskApp>
          <svg width="30" height="30" viewBox="0 0 30 30">
            <path d="M0 13a14 13 0 0 1 23-9l2-3 4 4-2 3 3 5v17H0z" fill="#6f7880" />
            <circle cx="15" cy="15" r="12.500" fill="#f6f6f6" />
            <path d="m8 10 7 5.500 7-5" stroke="#222" strokeWidth="2.400" fill="none" />
            <path d="M15 15v10" stroke="#d85028" strokeWidth="1.800" />
          </svg>
        </TaskApp>
        <TaskApp>
          <svg width="30" height="30" viewBox="0 0 30 30">
            <path d="m1 10 2.500-2L22 22.500V29z" fill="#0f80cb" />
            <path d="m1 20 2.500 2L22 7.500V1z" fill="#0a6db5" />
            <path d="M22 0 30 3.500v23L22 30z" fill="#2fa4ee" />
          </svg>
        </TaskApp>
        <TaskApp>
          <svg width="30" height="30" viewBox="0 0 30 30">
            <circle cx="14.500" cy="16.500" r="12.500" fill="#47902c" />
            <path d="M14 29A12.500 12.500 0 0 1 20 4" fill="none" stroke="#47902c" strokeWidth="4.500" strokeDasharray="2.400 1.700" />
            <path d="M27 5c-2 6-9 5-15 8-5 3-7 8-3 12 8 4 16 2 19-4 2-5 1-11-1-16z" fill="#6cbb3c" />
            <path d="M8 24c8 0 15-4 18-11" stroke="#3d8425" strokeWidth="1.500" fill="none" />
          </svg>
        </TaskApp>
        <div className="relative -ml-[5px] -mr-[5px] flex h-full w-[61px] items-center justify-center bg-[#f0f0f2]">
          <ChromeLogo size={30} />
          <span className="absolute left-[31px] top-[25px] size-[15px] rounded-full bg-[radial-gradient(circle_at_50%_50%,#150000_25%,#c00000_75%)]" />
          <span className="absolute bottom-0 h-[3px] w-full bg-[#0078d7]" />
        </div>
        <TaskApp line>
          <svg width="30" height="28" viewBox="0 0 30 28">
            <path d="m24 3 4 22-6 2-3-5z" fill="#c8b898" />
            <path d="M9 2h16l-1 24-6 1z" fill="#e9eef0" />
            <path d="M9 2h15L18 24 1 20z" fill="#6fb9c8" />
            <path d="M9 2h15l-3 10C15 9 9 10 5 12z" fill="#a8dbe4" />
            <path d="M9 1.500h15" stroke="#555" strokeWidth="2" strokeDasharray="1 1" />
          </svg>
        </TaskApp>
        <TaskApp line><PuttyLogo size={30} /></TaskApp>
      </div>
      <div className="ml-auto flex items-center">
        <span className="relative mr-[12px] size-[26px] rounded-full bg-gradient-to-br from-[#f3b52c] to-[#f56a0c]">
          <span className="absolute -top-[3px] left-[20px] size-[8px] rounded-full bg-[#c42b1c]" />
        </span>
        <span className="w-[48px] whitespace-nowrap text-[17.200px]">33°C</span>
        <span className="w-[80px] whitespace-nowrap text-[17.200px]">Sunny</span>
        <svg width="17" height="10" viewBox="0 0 17 10" fill="none" stroke="#111" strokeWidth="1.400">
          <path d="M.7 9.300 8.500 1l7.800 8.300" />
        </svg>
        <svg className="ml-[15px]" width="16" height="18" viewBox="0 0 16 18" fill="none" stroke="#111" strokeWidth="1.200">
          <rect x="1.500" y="4" width="9" height="10" rx="1.500" />
          <path d="m10.500 8 3.500-2v6l-3.500-2M3 1.800C5 .5 9 .5 11 1.800M3 16.200c2 1.300 6 1.300 8 0" />
        </svg>
        <svg className="ml-[11px]" width="20" height="14" viewBox="0 0 20 14">
          <path d="M6 3h11.500v2.500H20v4h-2.500V13H4V8" fill="none" stroke="#111" strokeWidth="1.200" />
          <path d="M7 4.500h9v7H5.500V8z" fill="#111" />
          <path d="M.8 1v3a2 2 0 0 0 4 0V1zM2.800 5v5" stroke="#111" fill="none" />
        </svg>
        <svg className="ml-[9px]" width="20" height="16" viewBox="0 0 20 16" fill="none" stroke="#111" strokeWidth="1.200">
          <path d="M1 5.500h3l4-4v13l-4-4H1zM11.500 5l6.500 6.500M18 5l-6.500 6.500" />
        </svg>
        <svg className="ml-[13px]" width="17" height="17" viewBox="0 0 17 17" fill="none" stroke="#111" strokeWidth="1.200">
          <path d="M.7 16.500C.7 8 7 1 16 .7M4.700 16.500c0-6 4.500-11.500 11.300-11.800M8.700 16.500c0-4 3-7.500 7.300-7.800" />
          <circle cx="14" cy="14.800" r="1.800" fill="#111" stroke="none" />
        </svg>
        <span className="ml-[13px] w-[30px] text-[14px] tracking-[-0.100px]">ENG</span>
        <div className="ml-[9px] w-[88px] whitespace-nowrap text-center text-[14.600px] leading-[23px]">
          <div>16:00</div>
          <div>02-03-2023</div>
        </div>
        <svg className="ml-[17px]" width="20" height="20" viewBox="0 0 20 20" fill="none" stroke="#111" strokeWidth="1.300">
          <path d="M.7.700h18.600V16H13l-3 3-3-3H.7z" />
        </svg>
        <span className="ml-[25px] mr-[5px] h-[50px] w-px bg-[#b8aca4]" />
      </div>
    </div>
  );
}

export default function App() {
  return (
    <div className="flex h-[1080px] w-[1920px] flex-col overflow-hidden">
      <TabStrip />
      <Toolbar />
      <MeetPage />
      <Taskbar />
    </div>
  );
}
